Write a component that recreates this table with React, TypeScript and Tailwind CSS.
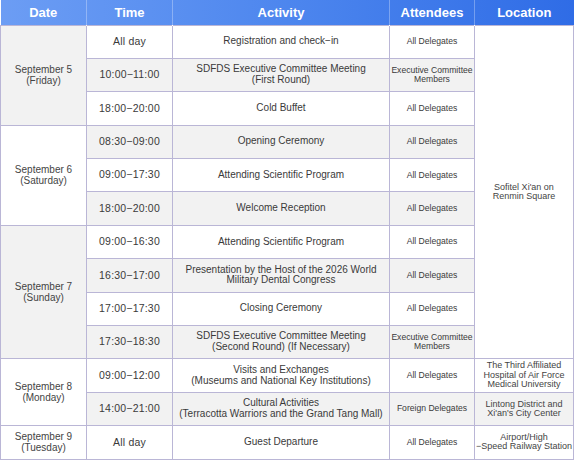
import React from "react";

type Row = {
  date?: { label: string; day: string; span: number; bg: string };
  time: string;
  activity: string[];
  attendees: string[];
  location?: { lines: string[]; span: number; bg: string };
  bg: string;
};

const W = "bg-white";
const G = "bg-[#f2f2f2]";

const rows: Row[] = [
  {
    date: { label: "September 5", day: "(Friday)", span: 3, bg: G },
    time: "All day",
    activity: ["Registration and check−in"],
    attendees: ["All Delegates"],
    location: { lines: ["Sofitel Xi'an on", "Renmin Square"], span: 10, bg: W },
    bg: W,
  },
  {
    time: "10:00−11:00",
    activity: ["SDFDS Executive Committee Meeting", "(First Round)"],
    attendees: ["Executive Committee", "Members"],
    bg: G,
  },
  { time: "18:00−20:00", activity: ["Cold Buffet"], attendees: ["All Delegates"], bg: W },
  {
    date: { label: "September 6", day: "(Saturday)", span: 3, bg: W },
    time: "08:30−09:00",
    activity: ["Opening Ceremony"],
    attendees: ["All Delegates"],
    bg: G,
  },
  { time: "09:00−17:30", activity: ["Attending Scientific Program"], attendees: ["All Delegates"], bg: W },
  { time: "18:00−20:00", activity: ["Welcome Reception"], attendees: ["All Delegates"], bg: G },
  {
    date: { label: "September 7", day: "(Sunday)", span: 4, bg: G },
    time: "09:00−16:30",
    activity: ["Attending Scientific Program"],
    attendees: ["All Delegates"],
    bg: W,
  },
  {
    time: "16:30−17:00",
    activity: ["Presentation by the Host of the 2026 World", "Military Dental Congress"],
    attendees: ["All Delegates"],
    bg: G,
  },
  { time: "17:00−17:30", activity: ["Closing Ceremony"], attendees: ["All Delegates"], bg: W },
  {
    time: "17:30−18:30",
    activity: ["SDFDS Executive Committee Meeting", "(Second Round) (If Necessary)"],
    attendees: ["Executive Committee", "Members"],
    bg: G,
  },
  {
    date: { label: "September 8", day: "(Monday)", span: 2, bg: W },
    time: "09:00−12:00",
    activity: ["Visits and Exchanges", "(Museums and National Key Institutions)"],
    attendees: ["All Delegates"],
    location: { lines: ["The Third Affiliated", "Hospital of Air Force", "Medical University"], span: 1, bg: W },
    bg: W,
  },
  {
    time: "14:00−21:00",
    activity: ["Cultural Activities", "(Terracotta Warriors and the Grand Tang Mall)"],
    attendees: ["Foreign Delegates"],
    location: { lines: ["Lintong District and", "Xi'an's City Center"], span: 1, bg: G },
    bg: G,
  },
  {
    date: { label: "September 9", day: "(Tuesday)", span: 1, bg: W },
    time: "All day",
    activity: ["Guest Departure"],
    attendees: ["All Delegates"],
    location: { lines: ["Airport/High", "−Speed Railway Station"], span: 1, bg: W },
    bg: W,
  },
];

const cell = "border border-[#bab6d6] text-center align-middle p-0 text-[#3a3a3a]";

export default function App() {
  return (
    <div
      className="w-[576px] h-[461px] bg-white overflow-hidden"
      style={{ fontFamily: '"Liberation Sans", Arial, sans-serif' }}
    >
      <table className="w-[573px] table-fixed border-collapse">
        <colgroup>
          <col className="w-[86px]" />
          <col className="w-[86px]" />
          <col className="w-[217px]" />
          <col className="w-[85px]" />
          <col className="w-[99px]" />
        </colgroup>
        <thead>
          <tr className="h-[25px] bg-gradient-to-r from-[#6c9df4] via-[#4d86ee] to-[#2f6ce6] text-white text-[13px] font-bold">
            <th className="border-r border-white/30">Date</th>
            <th className="border-r border-white/30">Time</th>
            <th className="border-r border-white/30">Activity</th>
            <th className="border-r border-white/30">Attendees</th>
            <th>Location</th>
          </tr>
        </thead>
        <tbody>
          {rows.map((r, i) => (
            <tr key={i} className="h-[33.4px]">
              {r.date && (
                <td rowSpan={r.date.span} className={`${cell} ${r.date.bg} text-[10px] leading-[1.1] text-[#444]`}>
                  <div>{r.date.label}</div>
                  <div>{r.date.day}</div>
                </td>
              )}
              <td className={`${cell} ${r.bg} text-[10.5px] tracking-[0.2px]`}>{r.time}</td>
              <td className={`${cell} ${r.bg} text-[10px] leading-[1.08]`}>
                {r.activity.map((l, j) => (
                  <div key={j}>{l}</div>
                ))}
              </td>
              <td className={`${cell} ${r.bg} text-[8.6px] leading-[1.1]`}>
                {r.attendees.map((l, j) => (
                  <div key={j}>{l}</div>
                ))}
              </td>
              {r.location && (
                <td
                  rowSpan={r.location.span}
                  className={`${cell} ${r.location.bg} text-[9px] leading-[1.05] whitespace-nowrap text-[#444]`}
                >
                  {r.location.lines.map((l, j) => (
                    <div key={j}>{l}</div>
                  ))}
                </td>
              )}
            </tr>
          ))}
        </tbody>
      </table>
    </div>
  );
}
